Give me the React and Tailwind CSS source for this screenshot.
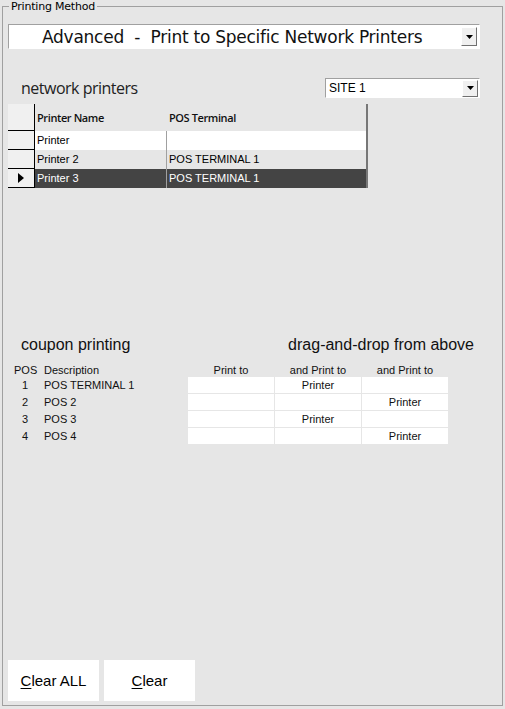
import React from "react";

const Arrow = ({ h = "h-[17px]" }) => (
  <div className={`w-[16px] ${h} bg-[#f0f0f0] border border-t-white border-l-white border-r-[#707070] border-b-[#707070] flex items-center justify-center shrink-0`}>
    <svg width="7" height="4" viewBox="0 0 7 4"><path d="M0 0h7L3.5 4z" fill="#000" /></svg>
  </div>
);

const printers = [
  { name: "Printer", pos: "", bg: "bg-white", text: "text-black" },
  { name: "Printer 2", pos: "POS TERMINAL 1", bg: "bg-[#e6e6e6]", text: "text-black" },
  { name: "Printer 3", pos: "POS TERMINAL 1", bg: "bg-[#444444]", text: "text-white", sel: true },
];

const coupons = [
  { n: "1", d: "POS TERMINAL 1", c: ["", "Printer", ""] },
  { n: "2", d: "POS 2", c: ["", "", "Printer"] },
  { n: "3", d: "POS 3", c: ["", "Printer", ""] },
  { n: "4", d: "POS 4", c: ["", "", "Printer"] },
];

export default function App() {
  return (
    <div className="w-[505px] h-[709px] bg-[#e6e6e6] pt-0 px-[2px] text-black font-['Liberation_Sans',Arial,sans-serif]">
      <fieldset className="h-[706px] border border-[#a0a0a0] pl-[5px] pr-[5px] flex flex-col">
        <legend className="px-[2px] ml-[1px] text-[11px] leading-[13px] font-['DejaVu_Sans',sans-serif] tracking-[-0.2px] text-black">Printing Method</legend>

        {/* main dropdown */}
        <div className="mt-[11px] w-[472px] h-[25px] bg-white border border-[#a0a0a0] border-b-white border-r-white flex items-center pr-[2px]">
          <div className="flex-1 pl-[33px] text-[17px] leading-[20px] font-['DejaVu_Sans',sans-serif] tracking-[-0.25px] whitespace-pre text-[#111]">Advanced  -  Print to Specific Network Printers</div>
          <Arrow h="h-[19px]" />
        </div>

        {/* network printers row */}
        <div className="mt-[29px] flex items-center w-[472px]">
          <div className="pl-[13px] text-[16px] leading-[18px] font-['Open_Sans',sans-serif] tracking-[-0.5px] text-[#222] flex-1">network printers</div>
          <div className="w-[155px] h-[20px] bg-white border border-[#a0a0a0] border-b-white border-r-white flex items-center pr-[1px]">
            <div className="flex-1 pl-[3px] text-[12px] leading-[14px]">SITE 1</div>
            <Arrow />
          </div>
        </div>

        {/* grid */}
        <div className="mt-[6px] w-[360px] flex flex-col border-r-2 border-[#777777] text-[11px] leading-[13px]">
          <div className="flex h-[27px]">
            <div className="w-[26px] bg-[#f0f0f0] border-b border-black"></div>
            <div className="w-[1px] bg-black"></div>
            <div className="flex-1 flex items-center">
              <div className="w-[132px] pl-[2px] font-semibold font-['Open_Sans',sans-serif] tracking-[-0.4px] text-[#111]">Printer Name</div>
              <div className="flex-1 pl-[2px] font-semibold font-['Open_Sans',sans-serif] tracking-[-0.4px] text-[#111]">POS Terminal</div>
            </div>
          </div>
          {printers.map((p, i) => (
            <div key={i} className="flex h-[19px]">
              <div className="w-[26px] bg-[#f0f0f0] border-b border-black flex items-center justify-center">
                {p.sel && (
                  <svg width="6" height="10" viewBox="0 0 6 10"><path d="M0 0l6 5-6 5z" fill="#000" /></svg>
                )}
              </div>
              <div className="w-[1px] bg-black"></div>
              <div className={`flex-1 flex items-center ${p.bg} ${p.text}`}>
                <div className="w-[132px] pl-[2px] border-r border-[#a0a0a0] h-full flex items-center">{p.name}</div>
                <div className="flex-1 pl-[2px]">{p.pos}</div>
              </div>
            </div>
          ))}
        </div>

        {/* coupon printing */}
        <div className="mt-[148px] flex items-end w-[472px] text-[16px] leading-[18px] text-[#111]">
          <div className="pl-[13px] flex-1">coupon printing</div>
          <div className="pr-[6px]">drag-and-drop from above</div>
        </div>

        <div className="mt-[10px] flex text-[11px] leading-[13px] text-[#111]">
          <div className="flex flex-col">
            <div className="flex h-[13px]">
              <div className="w-[36px] pl-[6px]">POS</div>
              <div className="w-[144px]">Description</div>
            </div>
            {coupons.map((c) => (
              <div key={c.n} className="flex h-[17px] items-center">
                <div className="w-[36px] pl-[14px]">{c.n}</div>
                <div className="w-[144px]">{c.d}</div>
              </div>
            ))}
          </div>
          <div className="flex flex-col">
            <div className="flex h-[13px] gap-[1px]">
              <div className="w-[86px] text-center">Print to</div>
              <div className="w-[86px] text-center">and Print to</div>
              <div className="w-[86px] text-center">and Print to</div>
            </div>
            {coupons.map((c) => (
              <div key={c.n} className="flex h-[17px] gap-[1px] pb-[1px]">
                {c.c.map((v, j) => (
                  <div key={j} className="w-[86px] bg-white text-center flex items-center justify-center">{v}</div>
                ))}
              </div>
            ))}
          </div>
        </div>

        <div className="flex-1"></div>

        {/* buttons */}
        <div className="mb-[4px] flex gap-[5px] text-[15px] leading-[17px]">
          <div className="w-[91px] h-[41px] bg-white flex items-center justify-center"><span><span className="underline underline-offset-[2px]">C</span>lear ALL</span></div>
          <div className="w-[91px] h-[41px] bg-white flex items-center justify-center"><span><span className="underline underline-offset-[2px]">C</span>lear</span></div>
        </div>
      </fieldset>
    </div>
  );
}
